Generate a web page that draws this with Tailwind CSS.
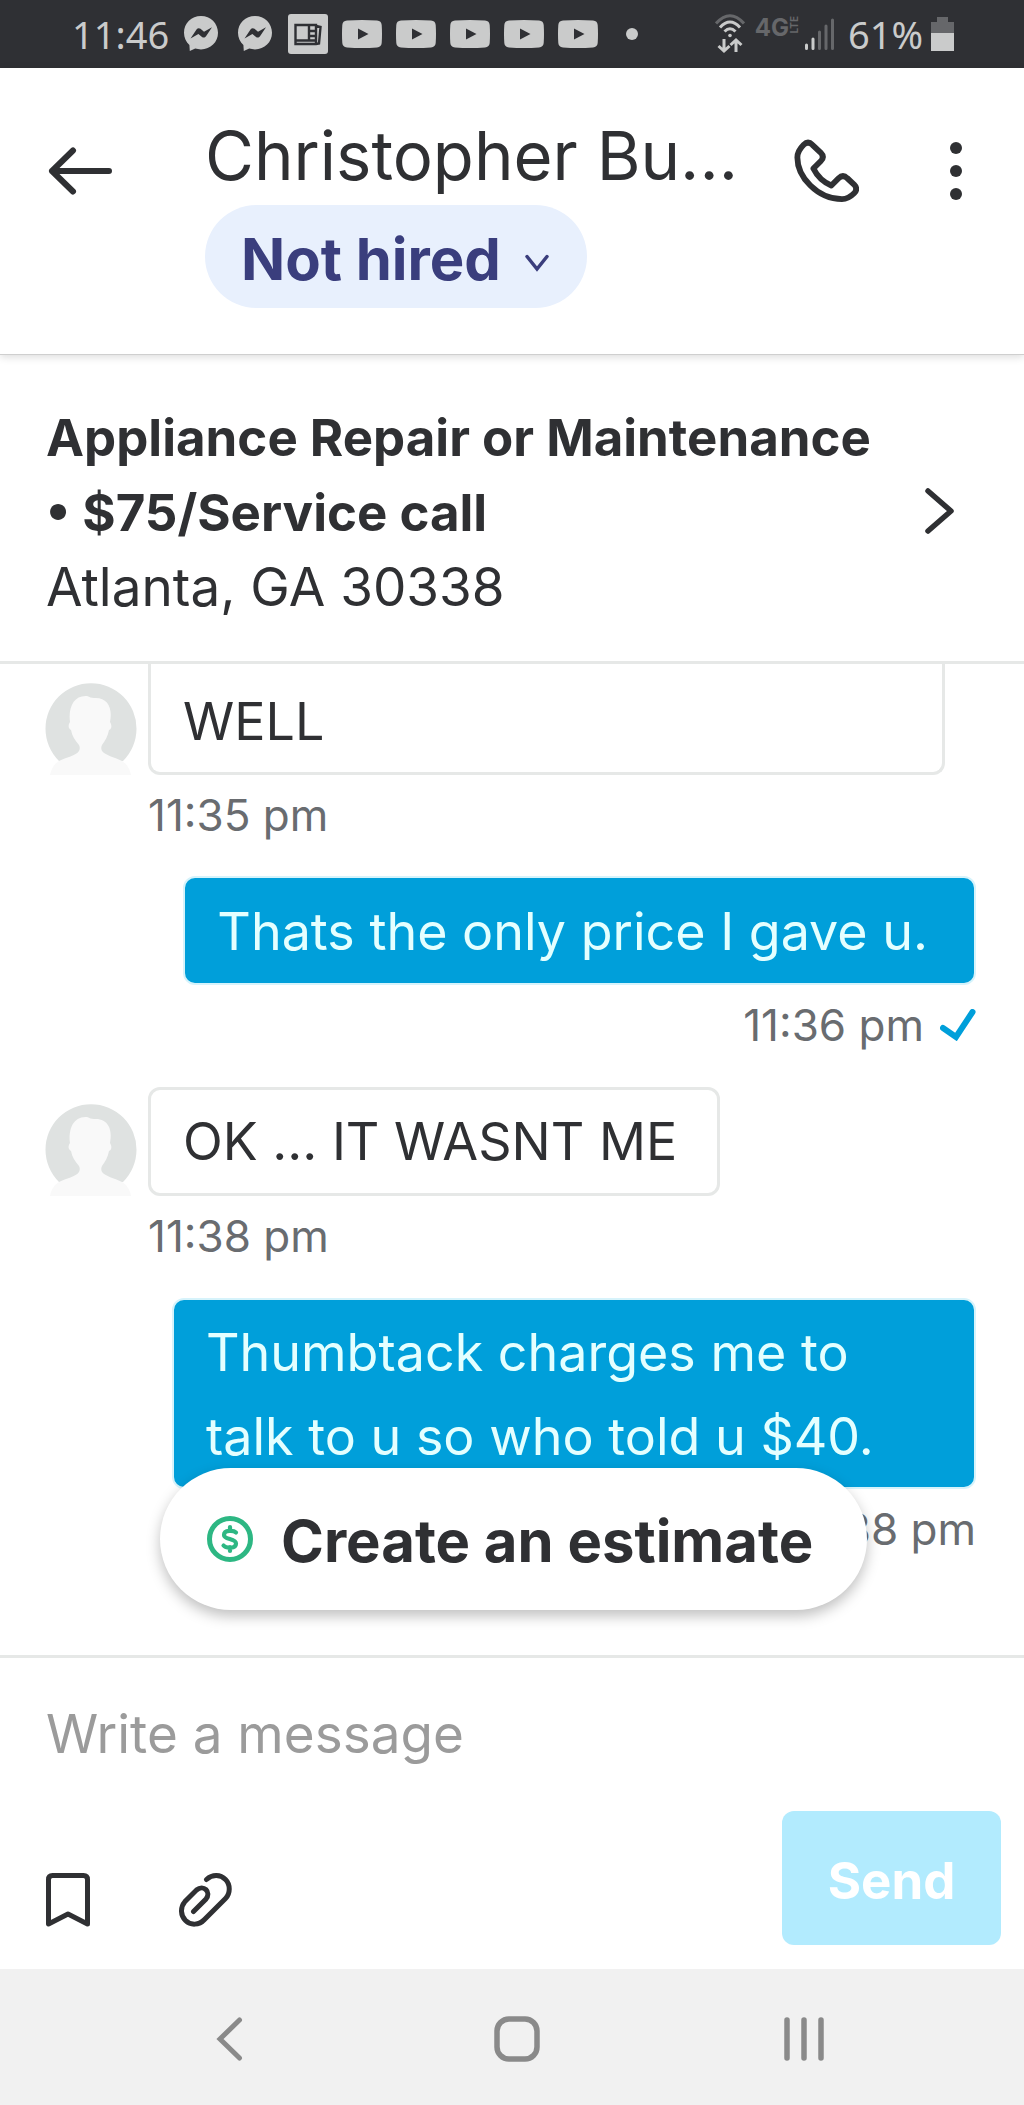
<!DOCTYPE html>
<html lang="en">
<head>
<meta charset="utf-8">
<meta name="viewport" content="width=device-width, initial-scale=1">
<title>Christopher Bu... - Messages</title>
<script src="https://cdn.jsdelivr.net/npm/@tailwindcss/browser@4"></script>
</head>
<body class="flex min-h-screen flex-col bg-white font-['Inter','Noto_Sans',sans-serif] text-[#2f3033]">

<svg class="hidden" aria-hidden="true">
  <symbol id="messenger" viewBox="0 0 34 36">
    <path fill="#cacbcb" d="M17 0C7.500 0 0 7.200 0 16.800c0 5 2 9.200 5.400 12.200L5.800 35l5.400-2.400c1.800.5 3.700.8 5.800.8 9.500 0 17-7.200 17-16.600S26.500 0 17 0z"/>
    <path fill="#2f3034" d="M6.500 22.500l6-9c1-1.400 2.600-1.700 4-.7l3.500 3 8-4.600-6 9c-1 1.400-2.600 1.800-4 .7l-3.600-2.900z"/>
  </symbol>
  <symbol id="video" viewBox="0 0 40 28">
    <path fill="#cacbcb" d="M5 .6C15 -.2 25 -.2 35 .6 38 .8 39.500 2.500 39.700 5c.4 6 .4 12 0 18-.2 2.500-1.700 4.200-4.700 4.400-10 .8-20 .8-30 0C2 27.200.5 25.500.3 23c-.4-6-.4-12 0-18C.500 2.500 2 .8 5 .6z"/>
    <path fill="#2f3034" d="M16 8.500v11l10.500-5.500z"/>
  </symbol>
  <symbol id="person" viewBox="0 0 92 92">
    <path fill="#dfe2e1" d="M14 78A45.500 45.500 0 1 1 78 78z"/>
    <path fill="#f9f9f9" d="M5 92c1-6 4-11 9-14 7-4 17-5 20-10 1-2 1-4 0-6-4-5-7-9-8-15-3-2-3-5-1-8-2-15 4-27 17-26 3 1 4 2 7 2 13-1 19 9 16 24 2 3 2 7-1 8-1 6-4 11-7 15-1 2-1 4 0 6 4 5 13 6 20 10 5 3 8 8 9 14z"/>
  </symbol>
</svg>

<div class="flex h-[68px] items-center bg-[#2f3034] pr-[70px] pl-[72px] text-[#cacbcb]">
  <span class="w-[94px] font-['Noto_Sans'] text-[38px] leading-none">11:46</span>
  <div class="ml-[18px] flex items-center gap-[14px]">
    <svg class="mr-[6px] h-9 w-[34px]"><use href="#messenger"/></svg>
    <svg class="h-9 w-[34px]"><use href="#messenger"/></svg>
    <svg class="ml-[2px] size-10" viewBox="0 0 40 40" fill="none"><rect width="40" height="40" rx="3" fill="#cacbcb"/><g stroke="#2f3034" stroke-width="2.400"><path d="M7.500 11h20.500v19H7.500zM28 12l4.500 1-1.500 16.500-3 .5M8 26.500h20M21 11v15M21 17h7M21 22h7"/></g></svg>
    <svg class="h-7 w-10"><use href="#video"/></svg>
    <svg class="h-7 w-10"><use href="#video"/></svg>
    <svg class="h-7 w-10"><use href="#video"/></svg>
    <svg class="h-7 w-10"><use href="#video"/></svg>
    <svg class="h-7 w-10"><use href="#video"/></svg>
    <span class="ml-[14px] size-3 rounded-full bg-[#cacbcb]"></span>
  </div>
  <div class="ml-auto flex items-center">
    <svg class="h-10 w-[30px]" viewBox="0 0 30 40" fill="none" stroke="#cacbcb" stroke-width="3"><path stroke="#66676a" d="M1 9.500Q15-6 29 9.500"/><path d="M5 13.500Q15 2.500 25 13.500M9.500 17.500Q15 12 20.500 17.500"/><circle cx="15" cy="21.500" r="1.800" fill="#cacbcb" stroke="none"/><path d="M9 25v12M3.500 32L9 37l5.500-5M21 38V26M15.500 31l5.500-5 5.500 5"/></svg>
    <span class="ml-[10px] flex h-10 items-start pt-[2px] leading-none font-bold text-[#66676a]"><span class="text-[24px]">4G</span><span class="rotate-180 text-[10px] [writing-mode:vertical-rl]">LTE</span></span>
    <svg class="ml-[6px] h-8 w-[29px]" viewBox="0 0 29 32" stroke-width="3" stroke-linecap="round" stroke="#66676a"><path stroke="#cacbcb" d="M1.500 27v3.500M8 21v9.500"/><path d="M14.500 14v16.500M21 8v22.500M27.500 2v28.500"/></svg>
    <span class="ml-[14px] font-['Noto_Sans'] text-[38px] leading-none">61%</span>
    <svg class="ml-2 h-[34px] w-[23px]" viewBox="0 0 23 34"><path fill="#66676a" d="M6 0h11v5h6v11H0V5h6z"/><path fill="#cacbcb" d="M0 16h23v18H0z"/></svg>
  </div>
</div>

<header class="relative z-10 flex h-[287px] items-start border-b border-[#cfcfcf] bg-white pr-[62px] pl-12 shadow-[0_2px_8px_rgba(0,0,0,0.14)]">
  <button type="button" aria-label="Back" class="mt-[79px]"><svg class="h-12 w-16" viewBox="0 0 64 48" fill="none" stroke="#2f3033" stroke-width="6" stroke-linecap="round" stroke-linejoin="round"><path d="M61 24H4M25 3.500L4 24l21 20.500"/></svg></button>
  <div class="ml-[93px] flex min-w-0 flex-1 flex-col items-start pt-12">
    <h1 class="w-full text-[67px] leading-[80px] whitespace-nowrap">Christopher Bu...</h1>
    <div class="mt-[9px] flex h-[103px] items-center gap-6 rounded-full bg-[#e8f0fd] pt-1 pr-[38px] pl-[36px] text-[#3a3e7d]">
      <select aria-label="Hiring status" class="appearance-none text-[58px] leading-[80px] font-bold"><option>Not hired</option></select>
      <svg class="mt-2 h-[18px] w-6" viewBox="0 0 24 18" fill="none" stroke="currentColor" stroke-width="3.500" stroke-linecap="round"><path d="M2 2.500l10 12.500 10-12.500"/></svg>
    </div>
  </div>
  <button type="button" aria-label="Call" class="mt-[70px]"><svg class="size-[66px]" viewBox="0 0 66 66" fill="none" stroke="#2f3033" stroke-width="6" stroke-linejoin="round"><path d="M11 7q4.500-4.500 9 0l8.500 8q4.500 4.500 0 9l-7.500 7.500c4.500 9 10 14 18.500 17.500l7.500-7.500q4.500-4.500 9 0l7 6.500q4.500 4.500 0 9-6 6-12.500 6C25 63 4.500 40 4.500 20q0-6.500 6.500-13z" transform="scale(.97)"/></svg></button>
  <button type="button" aria-label="More options" class="ml-[91px] mt-[74px]"><svg class="h-[58px] w-3" viewBox="0 0 12 58" fill="#2f3033"><circle cx="6" cy="6" r="6"/><circle cx="6" cy="29" r="6"/><circle cx="6" cy="52" r="6"/></svg></button>
</header>

<a href="#job" class="flex items-center justify-between border-b-[3px] border-[#e6e8e7] pt-[45px] pr-[68px] pb-[36px] pl-[46px] text-[53px] leading-[75px]">
  <span>
    <strong class="block text-[51px] font-bold">Appliance Repair or Maintenance<br>• $75/Service call</strong>
    <span class="block">Atlanta, GA 30338</span>
  </span>
  <svg class="mb-1 h-12 w-8" viewBox="0 0 32 48" fill="none" stroke="#2f3033" stroke-width="5.500" stroke-linecap="round" stroke-linejoin="round"><path d="M4 4l23 20L4 44"/></svg>
</a>

<main class="relative flex flex-1 flex-col pr-12 pl-[45px] text-[52px] leading-[84px]">
  <div class="flex items-end gap-[11px]">
    <svg class="size-[92px] shrink-0"><use href="#person"/></svg>
    <p class="w-[797px] rounded-b-xl border-[3px] border-t-0 border-[#e6e8e7] pt-[16px] pb-2 pl-8">WELL</p>
  </div>
  <time class="ml-[103px] text-[44px] leading-[80px] text-[#696c70]">11:35 pm</time>

  <p class="mt-[21px] w-fit max-w-[804px] self-end rounded-xl border-2 border-[#d6f3fb] bg-[#009fda] pt-3 pr-[46px] pb-[9px] pl-8 text-[#e4ffff]">Thats the only price I gave u.</p>
  <div class="flex items-center gap-4 self-end text-[44px] leading-[80px] text-[#696c70]">
    <time>11:36 pm</time>
    <svg class="h-8 w-9" viewBox="0 0 36 32" fill="none" stroke="#009fda" stroke-width="6" stroke-linecap="round"><path d="M3 19l13 9L32.500 3"/></svg>
  </div>

  <div class="mt-[22px] flex items-end gap-[11px]">
    <svg class="size-[92px] shrink-0"><use href="#person"/></svg>
    <p class="rounded-xl border-[3px] border-[#e6e8e7] pt-[10px] pr-10 pb-[9px] pl-8">OK ... IT WASNT ME</p>
  </div>
  <time class="ml-[103px] text-[44px] leading-[80px] text-[#696c70]">11:38 pm</time>

  <p class="mt-[22px] w-fit max-w-[804px] self-end rounded-xl border-2 border-[#d6f3fb] bg-[#009fda] pt-[11px] pr-[46px] pb-2 pl-8 text-[#e4ffff]">Thumbtack charges me to talk to u so who told u $40.</p>
  <time class="self-end text-[44px] leading-[80px] text-[#696c70]">11:38 pm</time>

  <button type="button" class="absolute bottom-[45px] left-[160px] flex h-[142px] items-center gap-7 rounded-full bg-white pr-[54px] pl-[47px] text-[58px] leading-[80px] font-bold shadow-[0_6px_14px_rgba(0,0,0,0.25)]">
    <svg class="size-[46px]" viewBox="0 0 46 46" fill="none" stroke="#2db783"><circle cx="23" cy="23" r="20.500" stroke-width="5"/><path stroke-width="4.200" stroke-linecap="round" d="M23 11v3M23 31v4M29 16.500c-2-2-12-3-12 2.500 0 5 12 3 12 8.500 0 5.500-10 5-12.500 2"/></svg>
    <span class="pt-1">Create an estimate</span>
  </button>
</main>

<form class="border-t-[3px] border-[#e6e8e7] pt-9 pr-[23px] pb-6 pl-[46px]">
  <input type="text" aria-label="Message" placeholder="Write a message" class="block h-[80px] w-full text-[53px] outline-none placeholder:text-[#9b9b9b]">
  <div class="mt-[37px] flex items-end">
    <button type="button" aria-label="Saved replies" class="mb-[18px]"><svg class="h-[54px] w-11" viewBox="0 0 44 54" fill="none" stroke="#2f3033" stroke-width="5" stroke-linejoin="round"><path d="M2.500 51V6.500q0-4 4-4h31q4 0 4 4V51L22 41z"/></svg></button>
    <button type="button" aria-label="Attach a file" class="mb-[18px] ml-[88px]"><svg class="size-[54px]" viewBox="0 0 54 54" fill="none" stroke="#2f3033" stroke-width="5" stroke-linecap="round"><path d="M28.500 6.500c6-5.500 14-5 19 0s5 14 0 19L26.500 46.500c-5.500 6-14 6-19 1s-5.500-13-.5-19L18.500 17c7-6 15 2 9.500 9L15.500 38.500"/></svg></button>
    <button type="submit" class="ml-auto h-[134px] w-[219px] rounded-xl bg-[#b2ebfe] pt-1 text-[51px] leading-none font-bold text-white">Send</button>
  </div>
</form>

<nav class="flex h-[136px] items-center justify-between bg-[#f1f1f1] pt-1 pr-[200px] pl-[215px]">
  <button type="button" aria-label="Back"><svg class="h-11 w-[34px]" viewBox="0 0 34 44" fill="none" stroke="#8a8a8a" stroke-width="5" stroke-linecap="round"><path d="M24.500 3L5 22l19.500 19"/></svg></button>
  <button type="button" aria-label="Home"><svg class="size-[46px]" viewBox="0 0 46 46" fill="none" stroke="#8a8a8a" stroke-width="5.500"><rect x="3" y="3" width="40" height="40" rx="12"/></svg></button>
  <button type="button" aria-label="Recent apps"><svg class="h-11 w-10" viewBox="0 0 40 44" stroke="#8a8a8a" stroke-width="5.500" stroke-linecap="round"><path d="M3 3v38M20 3v38M37 3v38"/></svg></button>
</nav>
</body>
</html>
